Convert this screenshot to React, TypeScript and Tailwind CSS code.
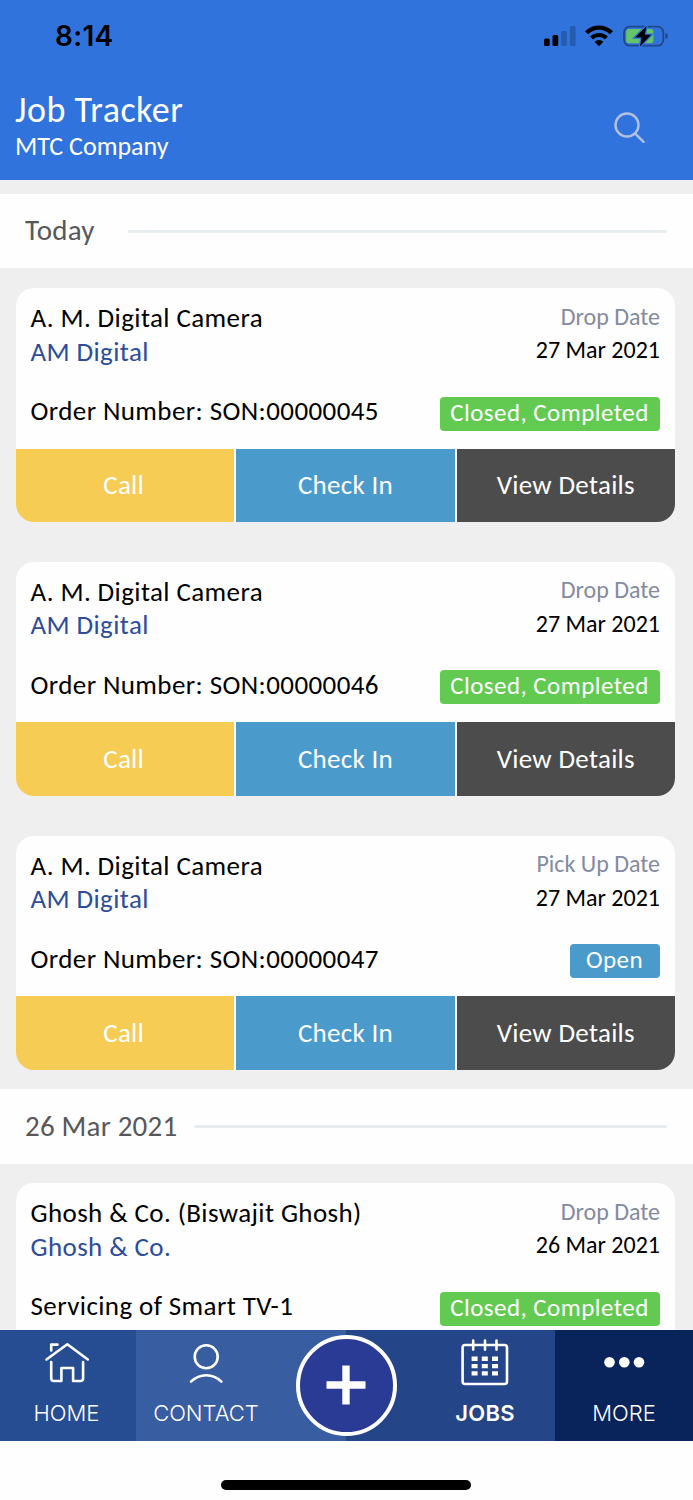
import React from 'react';

interface Job {
  title: string;
  company: string;
  note: string;
  dateLabel: string;
  date: string;
  status: 'Closed, Completed' | 'Open';
}

const TODAY: Job[] = [
  { title: 'A. M. Digital Camera', company: 'AM Digital', note: 'Order Number: SON:00000045', dateLabel: 'Drop Date', date: '27 Mar 2021', status: 'Closed, Completed' },
  { title: 'A. M. Digital Camera', company: 'AM Digital', note: 'Order Number: SON:00000046', dateLabel: 'Drop Date', date: '27 Mar 2021', status: 'Closed, Completed' },
  { title: 'A. M. Digital Camera', company: 'AM Digital', note: 'Order Number: SON:00000047', dateLabel: 'Pick Up Date', date: '27 Mar 2021', status: 'Open' },
];

const YESTERDAY: Job[] = [
  { title: 'Ghosh & Co. (Biswajit Ghosh)', company: 'Ghosh & Co.', note: 'Servicing of Smart TV-1', dateLabel: 'Drop Date', date: '26 Mar 2021', status: 'Closed, Completed' },
];

const StatusBar = () => (
  <div className="flex items-start justify-between pl-[55px] pr-[25px] pt-[19px]">
    <span className="pt-px font-['Inter'] text-[28px] font-semibold leading-[33px] tracking-[0.3px] text-black">8:14</span>
    <div className="flex items-start pt-[5px]">
      <svg width="32" height="24" viewBox="0 0 32 24" className="mr-[9px]">
        <rect x="0" y="14.5" width="5.7" height="7.5" rx="1.6" />
        <rect x="8.5" y="11" width="5.7" height="11" rx="1.6" />
        <rect x="17.2" y="7" width="5.7" height="15" rx="1.6" fill="#265cae" />
        <rect x="25.9" y="2" width="5.7" height="20" rx="1.6" fill="#265cae" />
      </svg>
      <svg width="28" height="24" viewBox="0 0 28 24" className="mr-[10px]">
        <path d="M1.6 8.8a17.4 17.4 0 0 1 24.8 0" fill="none" stroke="#000" strokeWidth="4.4" />
        <path d="M6.6 14a10.6 10.6 0 0 1 14.8 0" fill="none" stroke="#000" strokeWidth="4.2" />
        <path d="M14 22.2l-4.4-4.4a6.4 6.4 0 0 1 8.8 0z" />
      </svg>
      <svg width="45" height="24" viewBox="0 0 45 24">
        <rect x="1" y="2.7" width="39.3" height="19" rx="5.6" fill="none" stroke="#1f4888" strokeWidth="1.8" />
        <path d="M42.4 8.8q2.4 1 2.4 3.4t-2.4 3.4z" fill="#1f4888" />
        <rect x="3.2" y="4.9" width="27.2" height="14.4" rx="3" fill="#65c466" />
        <path d="M23.6 2L12 13.4h6.6L17 22.4l11.2-11.6h-6.4z" stroke="#3173dc" strokeWidth="2.6" />
        <path d="M23.6 2L12 13.4h6.6L17 22.4l11.2-11.6h-6.4z" />
      </svg>
    </div>
  </div>
);

const Header = () => (
  <header className="h-[180px] shrink-0 bg-[#3173dc] text-white">
    <StatusBar />
    <div className="flex justify-between pl-[15px] pr-[48px] pt-[37px]">
      <div>
        <h1 className="text-[36px] leading-[40px] tracking-[0.5px]">Job Tracker</h1>
        <p className="text-[26px] leading-[32px]">MTC Company</p>
      </div>
      <svg width="31" height="31" viewBox="0 0 31 31" fill="none" stroke="#b3bfdf" strokeWidth="2.4" strokeLinecap="round" className="mt-[22px]">
        <circle cx="13" cy="13" r="11.5" />
        <path d="M21.5 21.8l8 8" />
      </svg>
    </div>
  </header>
);

const DayHeading = ({ label, gap }: { label: string; gap: string }) => (
  <div className="flex h-[74.2px] shrink-0 items-center bg-[#fefefe] pl-[25px] pr-[26px]">
    <h2 className={`pb-[2px] text-[29px] leading-[36px] tracking-[0.2px] text-[#58585a] ${gap}`}>{label}</h2>
    <div className="h-[3.5px] flex-1 rounded-sm bg-[#e7ecee]" />
  </div>
);

const JobCard = ({ job, hideActions = false }: { job: Job; hideActions?: boolean }) => (
  <div className="my-[19.83px] ml-[16px] mr-[18px] h-[234px] shrink-0 overflow-hidden rounded-[18px] bg-[#fefefe]">
    <div className="flex h-[160.5px] justify-between pl-[14.5px] pr-[15px] pt-[13px]">
      <div className="text-[27px] leading-[33.5px] tracking-[0.4px] text-black">
        <h3>{job.title}</h3>
        <p className="text-[#2d4d99]">{job.company}</p>
        <p className="mt-[26px]">{job.note}</p>
      </div>
      <div className="flex flex-col items-end text-[24px] leading-[33.5px]">
        <span className="-mt-[1.5px] text-[#838ba2]">{job.dateLabel}</span>
        <span className="text-black">{job.date}</span>
        <span
          className={`mr-[0.5px] mt-[30px] flex h-[34px] items-center justify-center rounded-[4px] pb-[2px] text-[25px] leading-[30px] tracking-[0.45px] text-white ${
            job.status === 'Open' ? 'w-[90px] bg-[#4a9bcc]' : 'w-[220px] bg-[#62ca50]'
          }`}
        >
          {job.status}
        </span>
      </div>
    </div>
    {!hideActions && (
      <div className="grid h-[73.5px] grid-cols-3 gap-[2px] text-[27px] tracking-[0.3px] text-white">
        <button className="bg-[#f6cc54] pr-[3px]">Call</button>
        <button className="bg-[#4a9bcc]">Check In</button>
        <button className="bg-[#4c4c4c]">View Details</button>
      </div>
    )}
  </div>
);

const BottomNav = () => (
  <nav className="relative z-10 flex h-[111.5px] shrink-0 font-['Inter'] text-[22px] leading-[28px] text-white">
    <div className="flex w-[136px] flex-col items-center bg-[#264d92] pr-[3px] pt-[12px]">
      <svg width="46" height="44" viewBox="0 0 46 44" fill="none" stroke="#fff" strokeWidth="2.6" strokeLinecap="round" strokeLinejoin="round">
        <path d="M2.5 17.5L23.3 2.3l20.5 15.2" />
        <path d="M7.2 8.5V2.6h6.3" />
        <path d="M7.2 20v16.2q0 2.8 2.8 2.8h7.4V26h11.7v13h7q3 0 3-2.8V20" />
      </svg>
      <span className="mt-[13.5px] font-light">HOME</span>
    </div>
    <div className="flex w-[210px] flex-col items-center bg-[#385da1] pr-[70px] pt-[12px]">
      <svg width="36" height="44" viewBox="0 0 36 44" fill="none" stroke="#fff" strokeWidth="2.6" strokeLinecap="round">
        <circle cx="18.2" cy="14.7" r="11.5" />
        <path d="M3 39.6q6.5-6.4 15.2-6.4t15.2 6.4" />
      </svg>
      <span className="mt-[13.5px] font-light">CONTACT</span>
    </div>
    <div className="flex w-[209px] flex-col items-center bg-[#244587] pl-[69px] pt-[8px]">
      <svg width="48" height="48" viewBox="0 0 48 48" fill="none" stroke="#fff" strokeWidth="2.6">
        <rect x="1.6" y="7" width="44.4" height="39" rx="2.5" />
        <path d="M12.2 2.6v9M24 2.6v9M35.5 2.6v9" strokeLinecap="round" />
        <path d="M10.6 20.8h6M20.8 20.8h6M31 20.8h6M10.6 28.1h6M20.8 28.1h6M31 28.1h6M10.6 35.4h6M20.8 35.4h6M31 35.4h6" strokeWidth="4.4" />
      </svg>
      <span className="mt-[13.5px] font-semibold tracking-[0.3px]">JOBS</span>
    </div>
    <div className="flex w-[138px] flex-col items-center bg-[#09245a] pt-[12px]">
      <svg width="42" height="44" viewBox="0 0 42 44" fill="#fff">
        <circle cx="6.5" cy="20.2" r="5.3" />
        <circle cx="21.3" cy="20.2" r="5.3" />
        <circle cx="36" cy="20.2" r="5.3" />
      </svg>
      <span className="mt-[13.5px] font-light">MORE</span>
    </div>
    {/* Floating add button, sits over the seam of the middle tabs */}
    <button className="absolute left-[295.5px] top-[5px] flex h-[101px] w-[101px] items-center justify-center rounded-full border-4 border-white bg-[#2a3b96]">
      <svg width="40" height="40" viewBox="0 0 40 40" stroke="#fff" strokeWidth="7.4">
        <path d="M20 0.5v39M0.5 20h39" />
      </svg>
    </button>
  </nav>
);

export default function App() {
  return (
    <div className="flex h-[1500px] w-[693px] flex-col overflow-hidden bg-[#fefefe] font-['Carlito','Calibri','Lato',sans-serif]">
      <Header />
      <main className="flex h-[1149.5px] shrink-0 flex-col overflow-hidden bg-[#efefef] pt-[14.3px]">
        <DayHeading label="Today" gap="mr-[33px]" />
        <div className="flex shrink-0 flex-col">
          {TODAY.map(job => <JobCard key={job.note} job={job} />)}
        </div>
        <DayHeading label="26 Mar 2021" gap="mr-[17px]" />
        <div className="flex shrink-0 flex-col">
          {YESTERDAY.map(job => <JobCard key={job.note} job={job} hideActions />)}
        </div>
      </main>
      <BottomNav />
      <div className="flex flex-1 justify-center pr-px pt-[38.5px]">
        <div className="h-[10px] w-[250px] rounded-full bg-black" />
      </div>
    </div>
  );
}
